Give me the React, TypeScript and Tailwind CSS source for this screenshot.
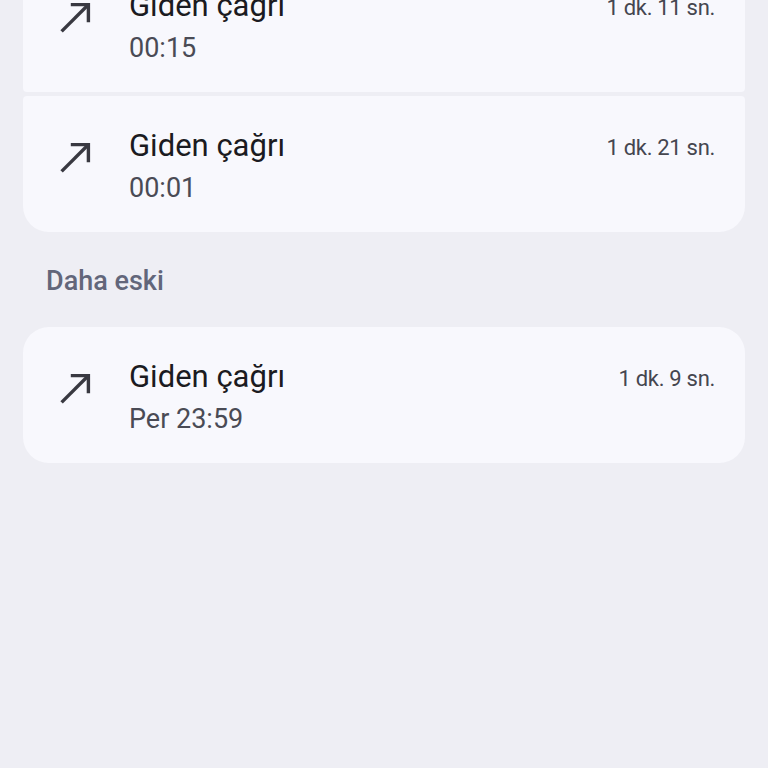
import React from "react";

type Call = { time: string; duration: string };

const OutgoingIcon = () => (
  <svg
    className="w-[48px] h-[48px] shrink-0 mb-[14px] text-[#393941]"
    viewBox="0 0 24 24"
    fill="none"
    stroke="currentColor"
    strokeWidth="1.7"
  >
    <path d="M4.8 19.2 18 6" />
    <path d="M9.4 5.8h8.8v8.8" />
  </svg>
);

function CallRow({ call, className }: { call: Call; className: string }) {
  return (
    <div className={`h-[136px] bg-[#f8f8fd] flex items-center pl-[29px] pr-[30px] ${className}`}>
      <OutgoingIcon />
      <div className="flex-1 ml-[29px] mt-[4px] flex flex-col">
        <div className="flex items-center justify-between h-[44px]">
          <span className="text-[31px] text-[#1b1b21]">Giden çağrı</span>
          <span className="text-[22px] text-[#45464f] tracking-[-0.3px] mt-[2px]">{call.duration}</span>
        </div>
        <div className="h-[40px] flex items-center text-[27px] text-[#4a4b55]">{call.time}</div>
      </div>
    </div>
  );
}

export default function App() {
  const today: Call[] = [
    { time: "00:15", duration: "1 dk. 11 sn." },
    { time: "00:01", duration: "1 dk. 21 sn." },
  ];
  const older: Call = { time: "Per 23:59", duration: "1 dk. 9 sn." };

  return (
    <main
      className="min-h-screen h-[768px] overflow-hidden bg-[#eeeef4]"
      style={{ fontFamily: "Roboto, 'Noto Sans', sans-serif" }}
    >
      <div className="px-[23px] -mt-[44px]">
        {/* Today group */}
        <div className="flex flex-col gap-[4px]">
          <CallRow call={today[0]} className="rounded-t-[26px] rounded-b-[4px]" />
          <CallRow call={today[1]} className="rounded-t-[4px] rounded-b-[26px]" />
        </div>

        {/* Older section */}
        <div className="h-[95px] flex items-center pl-[23px] pt-[4px] text-[27px] font-medium text-[#62667a]">
          Daha eski
        </div>
        <CallRow call={older} className="rounded-[26px]" />
      </div>
    </main>
  );
}
